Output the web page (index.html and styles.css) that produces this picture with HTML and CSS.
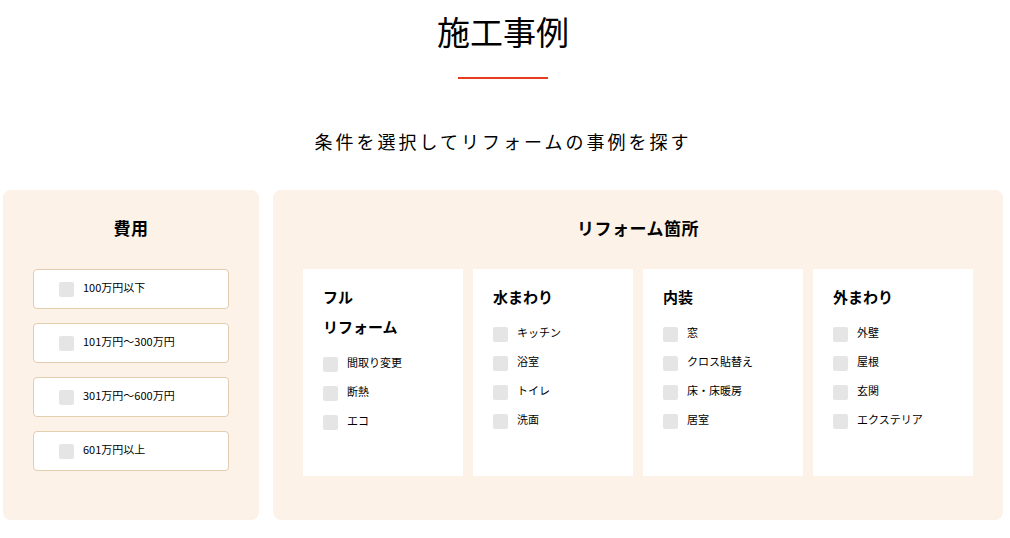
FILE: index.html
```html
<!DOCTYPE html>
<html lang="ja">

<head>
    <meta charset="utf-8">
    <title>施工事例</title>
    <link rel="stylesheet" href="styles.css">
</head>

<body>
    <div class="container">
        <h1 class="page-title">施工事例</h1>
        <div class="title-line"></div>

        <p class="lead">条件を選択してリフォームの事例を探す</p>

        <form class="search">
            <div class="panel panel-cost">
                <h2 class="panel-title">費用</h2>
                <label class="cost-item"><input type="checkbox" name="cost" value="1"><span class="text">100万円以下</span></label>
                <label class="cost-item"><input type="checkbox" name="cost" value="2"><span class="text">101万円～300万円</span></label>
                <label class="cost-item"><input type="checkbox" name="cost" value="3"><span class="text">301万円～600万円</span></label>
                <label class="cost-item"><input type="checkbox" name="cost" value="4"><span class="text">601万円以上</span></label>
            </div>

            <div class="panel panel-place">
                <h2 class="panel-title">リフォーム箇所</h2>
                <div class="cards">
                    <div class="card">
                        <h3 class="card-title">フル<br>リフォーム</h3>
                        <label class="check"><input type="checkbox" name="place"><span class="text">間取り変更</span></label>
                        <label class="check"><input type="checkbox" name="place"><span class="text">断熱</span></label>
                        <label class="check"><input type="checkbox" name="place"><span class="text">エコ</span></label>
                    </div>
                    <div class="card">
                        <h3 class="card-title">水まわり</h3>
                        <label class="check"><input type="checkbox" name="place"><span class="text">キッチン</span></label>
                        <label class="check"><input type="checkbox" name="place"><span class="text">浴室</span></label>
                        <label class="check"><input type="checkbox" name="place"><span class="text">トイレ</span></label>
                        <label class="check"><input type="checkbox" name="place"><span class="text">洗面</span></label>
                    </div>
                    <div class="card">
                        <h3 class="card-title">内装</h3>
                        <label class="check"><input type="checkbox" name="place"><span class="text">窓</span></label>
                        <label class="check"><input type="checkbox" name="place"><span class="text">クロス貼替え</span></label>
                        <label class="check"><input type="checkbox" name="place"><span class="text">床・床暖房</span></label>
                        <label class="check"><input type="checkbox" name="place"><span class="text">居室</span></label>
                    </div>
                    <div class="card">
                        <h3 class="card-title">外まわり</h3>
                        <label class="check"><input type="checkbox" name="place"><span class="text">外壁</span></label>
                        <label class="check"><input type="checkbox" name="place"><span class="text">屋根</span></label>
                        <label class="check"><input type="checkbox" name="place"><span class="text">玄関</span></label>
                        <label class="check"><input type="checkbox" name="place"><span class="text">エクステリア</span></label>
                    </div>
                </div>
            </div>
        </form>
    </div>
</body>

</html>
```

FILE: styles.css
```css
body {
    margin: 0;
    font-family: "Noto Sans CJK JP", sans-serif;
    color: #000;
    background: #fff;
}

.container {
    width: 1000px;
    margin-left: 3px;
}

.page-title {
    margin: 11px 0 0;
    font-size: 33px;
    line-height: 40px;
    font-weight: normal;
    text-align: center;
}

.title-line {
    width: 90px;
    height: 2px;
    margin: 26px auto 0;
    background-color: #e53d1e;
}

.lead {
    margin: 47px 0 0;
    font-size: 18px;
    line-height: 30px;
    letter-spacing: 3px;
    text-align: center;
}

.search {
    display: flex;
    gap: 14px;
    margin-top: 34px;
}

.panel {
    background-color: #fcf2e8;
    border-radius: 8px;
    padding: 23px 30px 44px;
}

.panel-cost {
    width: 256px;
    box-sizing: border-box;
}

.panel-place {
    width: 730px;
    box-sizing: border-box;
}

.panel-title {
    margin: 0 0 26px;
    font-size: 17px;
    line-height: 30px;
    letter-spacing: 0.5px;
    font-weight: bold;
    text-align: center;
}

.cost-item {
    display: flex;
    align-items: center;
    height: 40px;
    box-sizing: border-box;
    margin-bottom: 14px;
    padding-left: 25px;
    background-color: #fff;
    border: 1px solid #e3cdb0;
    border-radius: 4px;
    font-size: 11px;
}

.cost-item:last-child {
    margin-bottom: 0;
}

.cost-item .text {
    line-height: 16px;
    padding-bottom: 4px;
}

input[type="checkbox"] {
    appearance: none;
    -webkit-appearance: none;
    width: 15px;
    height: 15px;
    margin: 0 9px 0 0;
    background-color: #e5e5e5;
    border-radius: 2px;
    flex-shrink: 0;
}

.cards {
    display: flex;
    gap: 10px;
}

.card {
    width: 160px;
    height: 207px;
    box-sizing: border-box;
    padding: 13px 20px;
    background-color: #fff;
}

.card-title {
    margin: 0 0 15px;
    font-size: 15px;
    line-height: 30px;
    font-weight: bold;
}

.check {
    display: flex;
    align-items: center;
    height: 15px;
    margin-bottom: 14px;
    font-size: 11px;
}

.check .text {
    line-height: 16px;
    padding-bottom: 6px;
}
```
